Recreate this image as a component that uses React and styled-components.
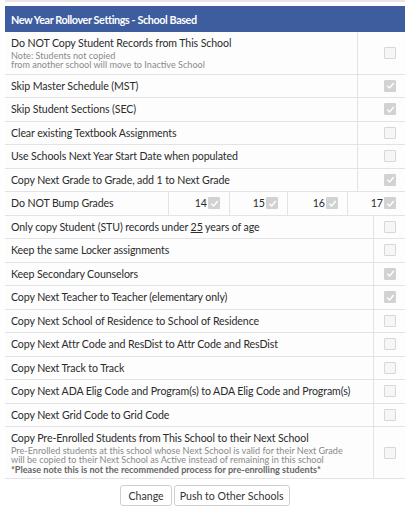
import React from "react";
import styled, { createGlobalStyle } from "styled-components";

const Global = createGlobalStyle`
  html, body { margin: 0; padding: 0; background: #fff; }
  body { font-family: "Lato", "Noto Sans", sans-serif; color: #2b2b2b; }
`;

const Page = styled.div`
  width: 400px;
  padding: 0 5px;
`;

const TopRule = styled.div`
  height: 2px;
  background: #e6e6e6;
  margin-bottom: 4px;
`;

const Header = styled.div`
  height: 26px;
  background: #3e5d9e;
  color: #fff;
  font-size: 10.8px;
  font-weight: 700;
  letter-spacing: -0.4px;
  display: flex;
  align-items: center;
  padding-left: 6px;
`;

const Table = styled.div`
  display: flex;
  flex-direction: column;
  background: #fdfdfd;
`;

const Row = styled.div`
  display: grid;
  grid-template-columns: 1fr ${(p) => p.$check}px;
  border-bottom: 1px solid #e3e3e3;
`;

const Label = styled.div`
  padding: 4px 6px;
  font-size: 10.6px;
  letter-spacing: -0.1px;
  line-height: 14.5px;
`;

const Small = styled.div`
  font-size: 9.1px;
  letter-spacing: 0;
  line-height: 9.5px;
  color: ${(p) => (p.$strong ? "#666" : "#8a8a8a")};
  font-weight: ${(p) => (p.$strong ? 700 : 400)};
`;

const CheckCell = styled.div`
  border-left: 1px solid #e3e3e3;
  display: flex;
  align-items: center;
  justify-content: flex-end;
  padding-right: 9px;
`;

const Box = styled.span`
  width: 12px;
  height: 12px;
  box-sizing: border-box;
  border: 1px solid ${(p) => (p.$checked ? "#d2d2d2" : "#d8d8d8")};
  background: ${(p) => (p.$checked ? "#d2d2d2" : "#f6f6f6")};
  border-radius: 1px;
  display: inline-flex;
  align-items: center;
  justify-content: center;
  flex: none;
`;

const BumpRow = styled.div`
  display: grid;
  grid-template-columns: 163px 61px 58px 60px 1fr;
  border-bottom: 1px solid #e3e3e3;
`;

const BumpCell = styled.div`
  border-left: 1px solid #e3e3e3;
  display: flex;
  align-items: center;
  justify-content: flex-end;
  gap: 1px;
  padding-right: 9px;
  font-size: 10.6px;
`;

const Under = styled.span`
  text-decoration: underline;
`;

const Buttons = styled.div`
  display: flex;
  justify-content: center;
  gap: 2px;
  margin-top: 6px;
`;

const Button = styled.button`
  font-family: inherit;
  font-size: 10.6px;
  color: #333;
  background: #fff;
  border: 1px solid #cfcfcf;
  border-radius: 3px;
  height: 21px;
  padding: 0 ${(p) => p.$pad}px;
`;

const Check = ({ checked }) => (
  <Box $checked={checked}>
    {checked && (
      <svg width="9" height="9" viewBox="0 0 10 10">
        <path d="M1.5 5.3 L4 7.8 L8.6 2.3" fill="none" stroke="#fff" strokeWidth="1.6" />
      </svg>
    )}
  </Box>
);

const group1 = [
  {
    label: "Do NOT Copy Student Records from This School",
    notes: ["Note: Students not copied", "from another school will move to Inactive School"],
    checked: false,
  },
  { label: "Skip Master Schedule (MST)", checked: true },
  { label: "Skip Student Sections (SEC)", checked: true },
  { label: "Clear existing Textbook Assignments", checked: false },
  { label: "Use Schools Next Year Start Date when populated", checked: false },
  { label: "Copy Next Grade to Grade, add 1 to Next Grade", checked: true },
];

const group2 = [
  {
    label: (
      <>
        Only copy Student (STU) records under <Under>25</Under> years of age
      </>
    ),
    checked: false,
  },
  { label: "Keep the same Locker assignments", checked: false },
  { label: "Keep Secondary Counselors", checked: true },
  { label: "Copy Next Teacher to Teacher (elementary only)", checked: true },
  { label: "Copy Next School of Residence to School of Residence", checked: false },
  { label: "Copy Next Attr Code and ResDist to Attr Code and ResDist", checked: false },
  { label: "Copy Next Track to Track", checked: false },
  { label: "Copy Next ADA Elig Code and Program(s) to ADA Elig Code and Program(s)", checked: false },
  { label: "Copy Next Grid Code to Grid Code", checked: false },
  {
    label: "Copy Pre-Enrolled Students from This School to their Next School",
    notes: [
      "Pre-Enrolled students at this school whose Next School is valid for their Next Grade",
      "will be copied to their Next School as Active instead of remaining in this school",
    ],
    strong: "*Please note this is not the recommended process for pre-enrolling students*",
    checked: false,
  },
];

const SettingRow = ({ item, check }) => (
  <Row $check={check}>
    <Label>
      {item.label}
      {item.notes && item.notes.map((n, i) => <Small key={i}>{n}</Small>)}
      {item.strong && <Small $strong>{item.strong}</Small>}
    </Label>
    <CheckCell>
      <Check checked={item.checked} />
    </CheckCell>
  </Row>
);

export default function App() {
  return (
    <Page>
      <Global />
      <TopRule />
      <Header>New Year Rollover Settings - School Based</Header>
      <Table>
        {group1.map((it, i) => (
          <SettingRow key={i} item={it} check={48} />
        ))}
        <BumpRow>
          <Label>Do NOT Bump Grades</Label>
          {["14", "15", "16", "17"].map((g) => (
            <BumpCell key={g}>
              {g}
              <Check checked />
            </BumpCell>
          ))}
        </BumpRow>
        {group2.map((it, i) => (
          <SettingRow key={i} item={it} check={32} />
        ))}
      </Table>
      <Buttons>
        <Button $pad={7}>Change</Button>
        <Button $pad={5}>Push to Other Schools</Button>
      </Buttons>
    </Page>
  );
}
